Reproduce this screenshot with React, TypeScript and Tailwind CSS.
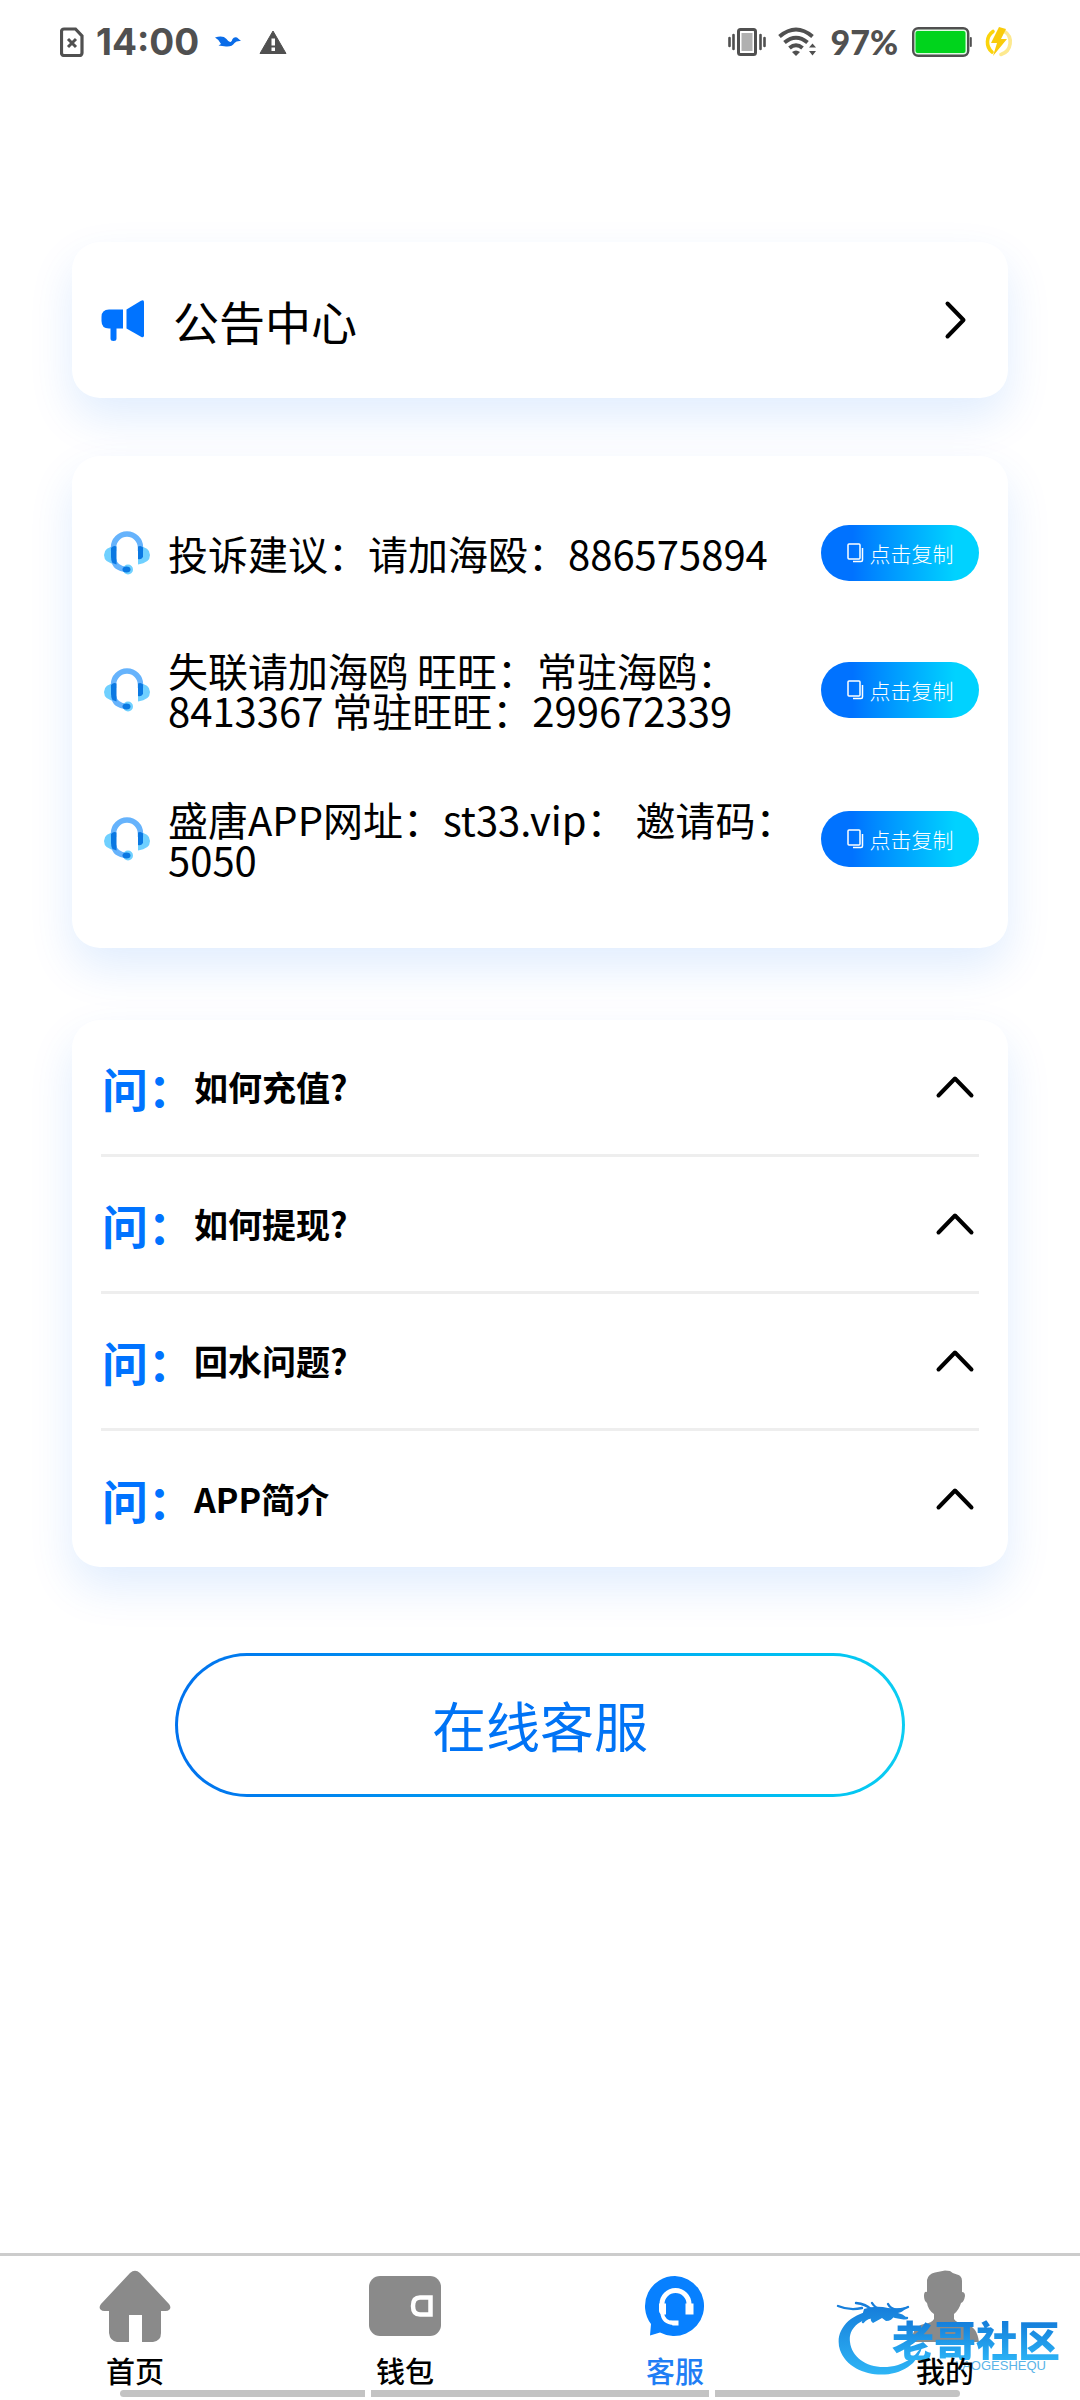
import { useState } from "react";
import type { ReactNode } from "react";

const contacts = [
  "投诉建议：请加海殴：886575894",
  "失联请加海鸥 旺旺：常驻海鸥：8413367 常驻旺旺：299672339",
  "盛唐APP网址：st33.vip： 邀请码：5050",
];

const questions = ["如何充值?", "如何提现?", "回水问题?", "APP简介"];

function StatusBar() {
  return (
    <header className="flex h-[84px] items-center justify-between pr-[66px] pl-[60px] text-[#505050]">
      <div className="flex items-center">
        <svg className="h-[30px] w-6" viewBox="0 0 24 30" fill="none" stroke="currentColor" aria-hidden="true">
          <path d="M4 2h11.500L22 9v17a2.500 2.500 0 0 1-2.500 2.500h-15.500a2.500 2.500 0 0 1-2.500-2.500v-21.500a2.500 2.500 0 0 1 2.500-2.500z" strokeWidth="3.200" />
          <path d="M8 12l8 8M16 12l-8 8" strokeWidth="3" />
        </svg>
        <span className="ml-3 font-['Inter'] text-[37px] leading-[40px] font-bold">14:00</span>
        <svg className="ml-4 h-3 w-[26px]" viewBox="0 0 26 12" fill="#0a6ce8" aria-hidden="true">
          <path d="M0 1.500Q8-1 11.500 3Q14 6.500 15.500 6Q17 5.500 17.500 3Q19 .5 22 1.500L26 5Q21.500 4.500 19.500 7Q17 11 11 10.500L3.500 9.500L6 8Q4 3.500 0 1.500z" />
        </svg>
        <svg className="ml-[18px] h-6 w-7" viewBox="0 0 28 24" aria-hidden="true">
          <path d="M14 1L27 23.500H1z" fill="currentColor" stroke="currentColor" strokeWidth="1" strokeLinejoin="round" />
          <path d="M12.500 8.500h3.500v7h-3.500zM12.500 17.500h3.500v3.500h-3.500z" fill="#fff" />
        </svg>
      </div>
      <div className="flex items-center">
        <svg className="h-7 w-[38px]" viewBox="0 0 38 28" aria-hidden="true">
          <rect x="10.500" y="1.500" width="17" height="25" rx="2" fill="#fff" stroke="currentColor" strokeWidth="3" />
          <rect x="13.500" y="5" width="11" height="18" fill="#b0b0b0" />
          <path d="M1.500 10v8M5.500 7v14M32.500 7v14M36.500 10v8" stroke="currentColor" strokeWidth="2.600" strokeLinecap="round" />
        </svg>
        <svg className="ml-3 h-[30px] w-[38px]" viewBox="0 0 38 30" fill="none" stroke="currentColor" strokeWidth="4" aria-hidden="true">
          <path d="M1.500 9.500Q18 -4.500 34.500 9.500M6.500 15.500Q18 6 29.500 15.500M11.500 21Q18 15.500 24.500 21" />
          <path d="M14 25q4-3 8 0l-4 4z" fill="currentColor" stroke="none" />
          <path d="M31 20.500l3.500-4 3.500 4zM31 24l3.500 4.500L38 24z" fill="currentColor" stroke="none" />
        </svg>
        <span className="ml-[14px] font-['Lato'] text-[34px] leading-[40px] font-black">97%</span>
        <svg className="ml-[14px] h-[30px] w-[60px]" viewBox="0 0 60 30" aria-hidden="true">
          <rect x="1.200" y="1.200" width="55" height="27.600" rx="5" fill="#e0fbe4" stroke="currentColor" strokeWidth="2.400" />
          <rect x="3.500" y="4" width="50" height="22" rx="2" fill="#00d41c" />
          <path d="M58.800 11v8" stroke="currentColor" strokeWidth="2" strokeLinecap="round" />
        </svg>
        <svg className="ml-3 h-[30px] w-[30px]" viewBox="0 0 30 30" aria-hidden="true">
          <path d="M9 4.500A13 13 0 0 0 8 25" fill="none" stroke="#fbd40c" strokeWidth="3.600" strokeLinecap="round" />
          <path d="M20 4A13 13 0 0 1 17 27.500" fill="none" stroke="#fde98f" strokeWidth="3.600" strokeLinecap="round" />
          <path d="M15 0L7 16h6L9 29L23 12h-6L22 2z" fill="#f9cb0b" />
        </svg>
      </div>
    </header>
  );
}

function Card({ children, className }: { children: ReactNode; className: string }) {
  return (
    <section className={`rounded-[28px] bg-white px-[29px] shadow-[0_20px_45px_rgba(0,110,245,0.12)] ${className}`}>
      {children}
    </section>
  );
}

function Megaphone() {
  return (
    <svg className="h-[41px] w-11 shrink-0" viewBox="0 0 44 41" fill="#0073ff" aria-hidden="true">
      <path d="M8 9.500h14v19h-6.500v10q0 2.500-3 2.500t-3-2.500v-10H8Q.5 28.500.5 21v-4Q.5 9.500 8 9.500z" />
      <path d="M25.500 9.500L40 .8q3-1.500 3 1.500v33q0 3-3 1.500L25.500 28.500z" />
    </svg>
  );
}

function Headset() {
  return (
    <svg className="h-11 w-[46px] shrink-0" viewBox="0 0 46 44" fill="none" aria-hidden="true">
      <path d="M12 15v18.500Q0 32 0 24T12 15zM34 15v18.500Q46 32 46 24T34 15z" fill="#6fd0ff" />
      <path d="M9.500 20v-3.500a13.500 13.500 0 0 1 27 0V20M9.500 28q1 9.500 13.500 10.500" stroke="#66b3fc" strokeWidth="5.500" />
      <circle cx="24" cy="38.500" r="5" fill="#6fd0ff" />
      <path d="M7 17q2.500-3 5.500-1.500v18L8.500 32Q7 29 7 26zM34 15.500q3-1.500 5 1V26q-2 3-5 2z" fill="#0a78e2" />
      <ellipse cx="22.500" cy="38.500" rx="4" ry="3" fill="#0a78e2" />
    </svg>
  );
}

function CopyButton() {
  return (
    <button
      type="button"
      className="flex h-14 w-[158px] shrink-0 items-center justify-center gap-[6px] rounded-full bg-linear-to-r from-[#0072ff] from-20% to-[#00d2ff] to-85% text-[21px] leading-7 font-light text-white"
    >
      <svg className="h-5 w-[17px]" viewBox="0 0 17 20" fill="none" stroke="#fff" strokeWidth="1.500" aria-hidden="true">
        <rect x="1" y="1" width="12" height="15" rx="1" />
        <path d="M15.500 5v12q0 1.500-1.500 1.500H6" />
      </svg>
      点击复制
    </button>
  );
}

function Faq({ text, last }: { text: string; last: boolean }) {
  const [open, setOpen] = useState(true);
  return (
    <button
      type="button"
      aria-expanded={open}
      onClick={() => setOpen(!open)}
      className={`flex w-full items-center text-left ${last ? "h-[136px]" : "h-[137px] border-b-[3px] border-[#eeeeee]"}`}
    >
      <span className="pl-px text-[46px] leading-[60px] font-bold text-[#0073ff]">问：</span>
      <span className="flex-1 text-[34px] leading-[48px] font-bold text-black">{text}</span>
      <svg
        className={`mr-1 h-6 w-10 ${open ? "" : "rotate-180"}`}
        viewBox="0 0 40 24"
        fill="none"
        stroke="#000"
        strokeWidth="4"
        strokeLinecap="round"
        strokeLinejoin="round"
        aria-hidden="true"
      >
        <path d="M3.500 20.500L20 3.500L36.500 20.500" />
      </svg>
    </button>
  );
}

function HomeIcon() {
  return (
    <svg className="h-[72px] w-[72px]" viewBox="0 0 72 72" fill="#8a8a8a" aria-hidden="true">
      <path d="M31 3q5-4.500 10 0l29 31q2.500 3 .5 5.500-1.500 1.500-4 1.500H62v22q0 8-8 9H43V45H30v27H18q-7-1-8-9V41H5.500q-2.500 0-4-1.500-2-2.500.5-5.500z" />
    </svg>
  );
}

function WalletIcon() {
  return (
    <svg className="h-[72px] w-[72px]" viewBox="0 0 72 72" aria-hidden="true">
      <rect x="0" y="6" width="72" height="60" rx="11" fill="#8a8a8a" />
      <path d="M61.500 27.500H51q-7 0-7 8.500t7 8.500h10.500z" fill="#8a8a8a" stroke="#fff" strokeWidth="4.500" />
    </svg>
  );
}

function ServiceIcon() {
  return (
    <svg className="h-[72px] w-[72px]" viewBox="0 0 72 72" fill="none" aria-hidden="true">
      <path d="M36 6a30 30 0 1 1-15 56.500L11 65.500l1-11.500A30 30 0 0 1 36 6z" fill="#0780ff" />
      <path d="M23 36v-2a13.500 13.500 0 0 1 27 0v2" stroke="#fff" strokeWidth="5" />
      <path d="M23 42q1 11 12 11" stroke="#fff" strokeWidth="3.600" />
      <path d="M20 33.500h7v11h-4q-3-1-3-4zM46.500 33.500h8v11h-8zM31 50.500h8.500v5h-6z" fill="#fff" />
    </svg>
  );
}

function PersonIcon() {
  return (
    <svg className="h-[72px] w-[72px]" viewBox="0 0 72 72" fill="#8a8a8a" aria-hidden="true">
      <path d="M18 22V10q1-6 8-7.500l10-2 5 .5q3 3 7 3.500 5 1 5 6.500V22q3 0 3 4-1 6-4 7-2 7-7 11v5q2 4 11 5 12 2 14 18H2Q4 56 15 54q8-1 10-5v-5q-6-4-7-11-3-2-3-7t3-4z" />
    </svg>
  );
}

function CommunityMark() {
  return (
    <div className="pointer-events-none absolute top-[44px] right-5 z-10 h-20 w-[224px]">
      <svg className="absolute inset-0 h-20 w-[100px]" viewBox="0 0 100 80" fill="none" aria-hidden="true">
        <defs>
          <linearGradient id="dragon" gradientUnits="userSpaceOnUse" x1="0" y1="0" x2="0" y2="76">
            <stop offset="0" stopColor="#1479d8" />
            <stop offset="1" stopColor="#2fb6f6" />
          </linearGradient>
        </defs>
        <path
          d="M40 10C12 13-2 32 4 50C12 74 50 82 72 67Q84 59 87 43Q80 59 62 65C37 72 16 60 14 42C12 27 26 17 44 18z"
          fill="url(#dragon)"
        />
        <path d="M28 9q12-4 24-1 10 1 18-1-2 5-8 6 5 1 8 4-8 1-12-1-2 5-8 5l-4-3-9 5q-4-3-1-6-6 1-10-1z" fill="url(#dragon)" />
        <path
          d="M2 6q12 5 24 2M20 3q10 1 16 7M36 3q3 5 10 7M52 4q2 4 8 6M72 7q-10 5-20 5M71 18q-9 1-17-3M38 16q-8 2-11 6"
          stroke="url(#dragon)"
          strokeWidth="2.400"
          strokeLinecap="round"
        />
      </svg>
      <p className="absolute top-[18px] right-0 bg-linear-to-b from-[#1479d8] to-[#2cb2f5] bg-clip-text text-[42px] leading-[42px] font-black text-transparent">
        老哥社区
      </p>
      <p className="absolute top-[58px] right-[14px] font-['Liberation_Sans'] text-[13px] leading-4 text-[#5ab4e8]">
        LAOGESHEQU
      </p>
    </div>
  );
}

const tabs = [
  { label: "首页", icon: <HomeIcon />, active: false },
  { label: "钱包", icon: <WalletIcon />, active: false },
  { label: "客服", icon: <ServiceIcon />, active: true },
  { label: "我的", icon: <PersonIcon />, active: false },
];

export default function App() {
  return (
    <div className="flex min-h-screen flex-col bg-white font-['Noto_Sans_CJK_SC',sans-serif] text-black">
      <StatusBar />
      <main className="flex flex-1 flex-col px-[72px] pt-[158px]">
        <Card className="">
          <button type="button" className="flex h-[156px] w-full items-center text-left">
            <Megaphone />
            <span className="ml-7 flex-1 text-[46px] leading-[60px]">公告中心</span>
            <svg
              className="mr-3 h-10 w-6"
              viewBox="0 0 24 40"
              fill="none"
              stroke="#000"
              strokeWidth="4"
              strokeLinecap="round"
              strokeLinejoin="round"
              aria-hidden="true"
            >
              <path d="M4.500 3.500L20.500 20L4.500 36.500" />
            </svg>
          </button>
        </Card>

        <Card className="mt-[58px] py-[69px]">
          <ul className="flex flex-col gap-[69px]">
            {contacts.map((text) => (
              <li key={text} className="flex items-center pl-[3px]">
                <Headset />
                <p className="mr-4 ml-[18px] flex-1 text-[40px] leading-[40px]">{text}</p>
                <CopyButton />
              </li>
            ))}
          </ul>
        </Card>

        <Card className="mt-[72px]">
          {questions.map((text, i) => (
            <Faq key={text} text={text} last={i === questions.length - 1} />
          ))}
        </Card>

        <div className="mx-[103px] mt-[86px] rounded-full bg-linear-to-r from-[#0072ee] to-[#0ccdf2] p-[3px]">
          <button
            type="button"
            className="h-[138px] w-full rounded-full bg-white text-[54px] leading-[72px] text-[#0073f5]"
          >
            在线客服
          </button>
        </div>
      </main>

      <nav className="relative h-[147px] border-t-[3px] border-[#cccccc]">
        <CommunityMark />
        <ul className="grid grid-cols-4">
          {tabs.map((tab) => (
            <li key={tab.label}>
              <a href="#" aria-current={tab.active ? "page" : undefined} className="flex flex-col items-center pt-[14px]">
                {tab.icon}
                <span
                  className={`relative z-20 mt-2 text-[29px] leading-[40px] font-medium ${tab.active ? "text-[#1f7ef5]" : "text-black"}`}
                >
                  {tab.label}
                </span>
              </a>
            </li>
          ))}
        </ul>
        <div className="absolute inset-x-[120px] bottom-[3px] grid h-[7px] grid-cols-[245fr_338fr_245fr] gap-[6px]">
          <span className="rounded-l-full bg-[#c3c3c3]" />
          <span className="bg-[#c3c3c3]" />
          <span className="rounded-r-full bg-[#c3c3c3]" />
        </div>
      </nav>
    </div>
  );
}
